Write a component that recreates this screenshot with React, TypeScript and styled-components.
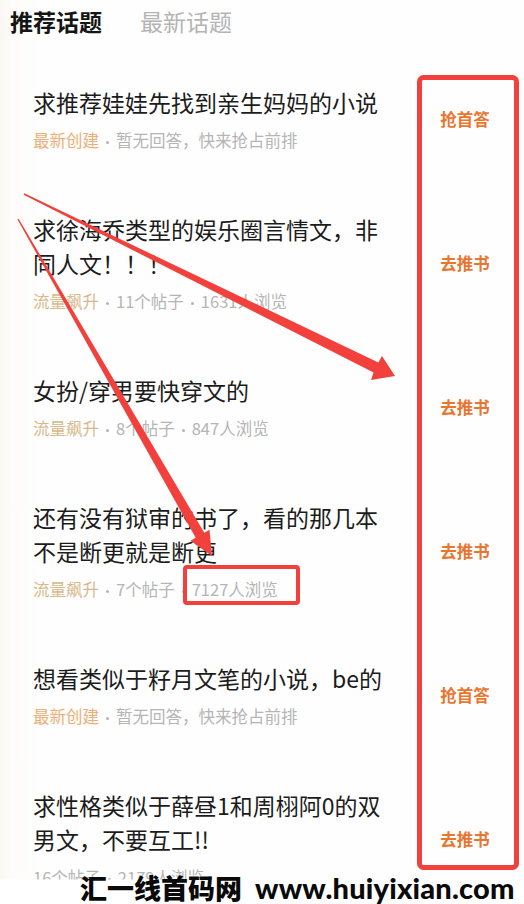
import React from "react";
import styled, { createGlobalStyle } from "styled-components";

const GlobalStyle = createGlobalStyle`
  html, body { margin: 0; padding: 0; background: #fdfdfc; }
  * { box-sizing: border-box; }
`;

const FONT = `"Noto Sans CJK SC", "Noto Sans", sans-serif`;

const Page = styled.div`
  position: relative;
  width: 524px;
  height: 904px;
  overflow: hidden;
  font-family: ${FONT};
  background: linear-gradient(90deg, #fbf7f2 0px, #fdfcfa 10px, #fefefe 40px);
`;

const Tabs = styled.div`
  display: flex;
  gap: 38px;
  height: 55px;
  padding: 5px 0 0 10px;
`;

const Tab = styled.div<{ $active?: boolean }>`
  font-size: 23px;
  line-height: 32px;
  font-weight: ${(p) => (p.$active ? 700 : 400)};
  color: ${(p) => (p.$active ? "#151515" : "#b4b4b4")};
`;

const Row = styled.div`
  display: flex;
  align-items: center;
  justify-content: space-between;
  padding: 30px 9px 30px 33px;
`;

const Body = styled.div`
  width: 356px;
`;

const Title = styled.div`
  font-size: 23px;
  line-height: 34px;
  color: #1c1c1c;
`;

const Meta = styled.div`
  margin-top: 9px;
  font-size: 16.5px;
  line-height: 24px;
  color: #b5b5b5;
  white-space: nowrap;
`;

const Tag = styled.span<{ $kind: "new" | "hot" }>`
  color: ${(p) => (p.$kind === "new" ? "#ecae78" : "#d7b98b")};
`;

const Dot = styled.span`
  display: inline-block;
  width: 3px;
  height: 3px;
  margin: 0 7px;
  border-radius: 50%;
  background: #b5b5b5;
  vertical-align: middle;
`;

const Action = styled.div`
  width: 100px;
  text-align: center;
  font-size: 16.5px;
  font-weight: 700;
  color: #e9752f;
`;

const Overlay = styled.svg`
  position: absolute;
  left: 0;
  top: 0;
  pointer-events: none;
`;

const Watermark = styled.div`
  position: absolute;
  left: 0;
  right: 0;
  top: 871px;
  height: 33px;
  display: flex;
  align-items: baseline;
  gap: 13px;
  padding-left: 80px;
  background: linear-gradient(180deg, rgba(255, 255, 255, 0) 0px, rgba(255, 255, 255, 0) 8px, #ffffff 9px);
  color: #0a0a0a;
  white-space: nowrap;
`;

const MarkCn = styled.span`
  font-family: ${FONT};
  font-size: 27px;
  line-height: 33px;
  font-weight: 900;
`;

const MarkEn = styled.span`
  font-family: Lato, "Noto Sans", sans-serif;
  font-size: 29px;
  line-height: 33px;
  font-weight: 900;
  letter-spacing: 0.2px;
`;

type Topic = {
  title: string;
  tag?: "new" | "hot";
  parts: string[];
  action: string;
};

const topics: Topic[] = [
  { title: "求推荐娃娃先找到亲生妈妈的小说", tag: "new", parts: ["暂无回答，快来抢占前排"], action: "抢首答" },
  { title: "求徐海乔类型的娱乐圈言情文，非同人文！！！", tag: "hot", parts: ["11个帖子", "1631人浏览"], action: "去推书" },
  { title: "女扮/穿男要快穿文的", tag: "hot", parts: ["8个帖子", "847人浏览"], action: "去推书" },
  { title: "还有没有狱审的书了，看的那几本不是断更就是断更", tag: "hot", parts: ["7个帖子", "7127人浏览"], action: "去推书" },
  { title: "想看类似于籽月文笔的小说，be的", tag: "new", parts: ["暂无回答，快来抢占前排"], action: "抢首答" },
  { title: "求性格类似于薛昼1和周栩阿0的双男文，不要互工!!", parts: ["16个帖子", "2179人浏览"], action: "去推书" },
];

const RED = "#f2403c";

export default function App() {
  return (
    <>
      <GlobalStyle />
      <Page>
        <Tabs>
          <Tab $active>推荐话题</Tab>
          <Tab>最新话题</Tab>
        </Tabs>
        {topics.map((t, i) => (
          <Row key={i}>
            <Body>
              <Title>{t.title}</Title>
              <Meta>
                {t.tag && (
                  <>
                    <Tag $kind={t.tag}>{t.tag === "new" ? "最新创建" : "流量飙升"}</Tag>
                    <Dot />
                  </>
                )}
                {t.parts.map((p, j) => (
                  <React.Fragment key={j}>
                    {j > 0 && <Dot />}
                    {p}
                  </React.Fragment>
                ))}
              </Meta>
            </Body>
            <Action>{t.action}</Action>
          </Row>
        ))}
        <Overlay width="524" height="904" viewBox="0 0 524 904">
          <rect x="419.5" y="77.5" width="97" height="790" rx="4" fill="none" stroke={RED} strokeWidth="5" />
          <rect x="185" y="567" width="113" height="36" rx="2" fill="none" stroke={RED} strokeWidth="4" />
          <polygon
            fill={RED}
            points="24.35,193.3 378.4,362.6 382,356 395,376 371,380 373.6,372.4 23.65,194.7"
          />
          <polygon
            fill={RED}
            points="18.6,218.65 204.3,532.7 209.5,529.7 212,556 190.5,540.7 195.7,537.7 17.4,219.35"
          />
        </Overlay>
        <Watermark>
          <MarkCn>汇一线首码网</MarkCn>
          <MarkEn>www.huiyixian.com</MarkEn>
        </Watermark>
      </Page>
    </>
  );
}
